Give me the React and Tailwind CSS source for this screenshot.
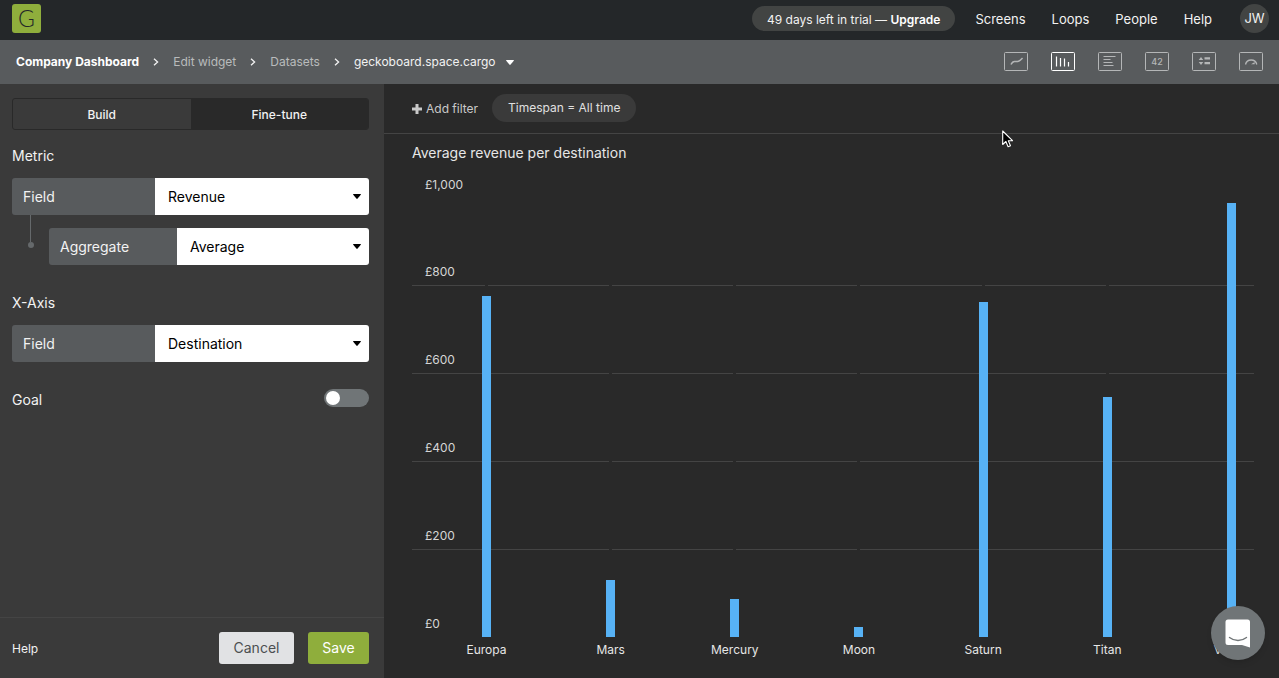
import React, { useState } from 'react';

const navLinks = ['Screens', 'Loops', 'People', 'Help'];

const destinations = [
  { name: 'Europa', revenue: 776 },
  { name: 'Mars', revenue: 130 },
  { name: 'Mercury', revenue: 86 },
  { name: 'Moon', revenue: 23 },
  { name: 'Saturn', revenue: 762 },
  { name: 'Titan', revenue: 547 },
  { name: 'Venus', revenue: 989 },
];

const axisMax = 1000;
const ticks = ['£800', '£600', '£400', '£200'];

const Caret = ({ className }) => (
  <svg aria-hidden="true" viewBox="0 0 8 5" className={className} fill="currentColor">
    <path d="M0 .6Q0 0 .6 0h6.8q.6 0 .6.6L4.6 4.6q-.6.6-1.2 0z" />
  </svg>
);

// ── Widget type icons, all drawn on the same 24x19 frame ──
const widgetTypes = [
  {
    label: 'Line chart',
    art: <path d="M7 12.5c1-2 2-3 3.500-3s2.500.3 4-.3 2.500-1.700 4-3.200" fill="none" stroke="currentColor" strokeWidth="1.5" />,
  },
  {
    label: 'Column chart',
    active: true,
    art: <path d="M5.500 4.500v10M9.500 6v8.500M13.500 6.500v8M17.500 10v4.500" stroke="currentColor" strokeWidth="1.2" />,
  },
  {
    label: 'Bar chart',
    art: <path d="M5.500 4.500h12M5.500 7.500h7M5.500 10.500h9M5.500 13.500h10" stroke="currentColor" strokeWidth="1.2" />,
  },
  {
    label: 'Number',
    art: (
      <text x="12" y="12.500" textAnchor="middle" fontSize="9" fontWeight="500" fill="currentColor">42</text>
    ),
  },
  {
    label: 'Leaderboard',
    art: <path d="M6.700 8l2.300-3 2.300 3zM6.700 10h4.600L9 13zM12.500 5.300H18v2.200h-5.500zM12.500 10H18v2.200h-5.500z" fill="currentColor" />,
  },
  {
    label: 'Geckometer',
    art: (
      <g fill="none" stroke="currentColor" strokeWidth="1.3">
        <path d="M6.500 12.500a5.800 5.800 0 0 1 11.300 0" />
        <path d="M12 12.300l3.700-2.300v2.300z" fill="currentColor" stroke="none" />
      </g>
    ),
  },
];

const Header = () => (
  <header className="flex h-10 items-center justify-between bg-[#242729] pl-3 pr-[10px]">
    <a href="#home" aria-label="Home" className="mb-1 mt-px flex h-[29px] w-[29px] items-center justify-center rounded-[3px] bg-[#8fae3c] font-[Lato] text-[23px] font-light leading-none text-[#242729]">
      G
    </a>
    <nav className="flex items-center text-[13px] text-[#f2f2f2]">
      <a href="#upgrade" className="mb-1 mr-5 flex h-[25px] items-center rounded-full bg-[#424443] px-[15px] pt-[3px] text-xs">
        <span>
          49 days left in trial — <strong className="font-semibold text-white">Upgrade</strong>
        </span>
      </a>
      <div className="mr-7 flex gap-[26px]">
        {navLinks.map((link) => (
          <a key={link} href={`#${link.toLowerCase()}`}>{link}</a>
        ))}
      </div>
      <button type="button" className="mb-1 flex h-[29px] w-[29px] items-center justify-center rounded-full bg-[#424443] pt-px">
        JW
      </button>
    </nav>
  </header>
);

const Separator = () => (
  <svg aria-hidden="true" viewBox="0 0 6 8" className="mx-[14px] h-2 w-[6px]" fill="none" stroke="#f2f2f2" strokeWidth="1.3">
    <path d="M1 .7L4.600 4 1 7.300" />
  </svg>
);

const Toolbar = () => (
  <div className="flex h-11 items-center justify-between bg-[#585b5d] px-4">
    <nav aria-label="Breadcrumb" className="flex items-center text-xs text-[#b9bbbc]">
      <a href="#dashboard" className="font-bold text-white">Company Dashboard</a>
      <Separator />
      <a href="#edit">Edit widget</a>
      <Separator />
      <a href="#datasets">Datasets</a>
      <Separator />
      <button type="button" className="flex items-center gap-[10px] text-[#f2f2f2]">
        geckoboard.space.cargo
        <Caret className="h-[5px] w-2 text-white" />
      </button>
    </nav>
    <div className="flex gap-[23px] pb-[2px]">
      {widgetTypes.map(({ label, active, art }) => (
        <button
          key={label}
          type="button"
          aria-label={label}
          className={active ? 'text-white' : 'text-[#b4b6b7]'}
        >
          <svg viewBox="0 0 24 19" className="h-[19px] w-6">
            <rect x=".5" y=".5" width="23" height="18" rx="1" fill="none" stroke="currentColor" />
            {art}
          </svg>
        </button>
      ))}
    </div>
  </div>
);

const SelectField = ({ id, label, labelWidth, options }) => (
  <div className="relative flex h-[37px] flex-1 overflow-hidden rounded-[3px] text-sm">
    <label htmlFor={id} className={`flex items-center bg-[#585b5d] pl-[11px] text-[#f2f2f2] ${labelWidth}`}>
      {label}
    </label>
    <select id={id} className="min-w-0 flex-1 appearance-none bg-white pl-[13px] text-black">
      {options.map((option) => (
        <option key={option}>{option}</option>
      ))}
    </select>
    <Caret className="pointer-events-none absolute right-2 top-4 h-[5px] w-2 text-black" />
  </div>
);

const Sidebar = () => {
  const [goal, setGoal] = useState(false);

  return (
    <aside className="flex w-96 shrink-0 flex-col bg-[#3a3a3a] text-[#f2f2f2]">
      <div className="flex-1 px-3 pr-[15px] pt-[14px]">
        <div className="flex h-8 overflow-hidden rounded-[3px] border border-[#292929] text-xs font-medium">
          <button type="button" className="flex-1 pt-[2px]">Build</button>
          <button type="button" className="flex-1 bg-[#292929] pt-[2px]">Fine-tune</button>
        </div>

        <h2 className="mt-4 text-sm leading-5">Metric</h2>
        <div className="mt-3 flex">
          <SelectField id="metric-field" label="Field" labelWidth="w-[143px]" options={['Revenue', 'Weight']} />
        </div>
        <div className="flex">
          {/* connector from the field down to its aggregate */}
          <div className="flex h-[33px] w-[37px] flex-col items-center">
            <div className="w-px flex-1 bg-[#65696b]" />
            <div className="h-[6px] w-[6px] rounded-full bg-[#65696b]" />
          </div>
          <div className="mt-[13px] flex flex-1">
            <SelectField id="metric-aggregate" label="Aggregate" labelWidth="w-32" options={['Average', 'Sum', 'Count']} />
          </div>
        </div>

        <h2 className="mt-7 text-sm leading-5">X-Axis</h2>
        <div className="mt-3 flex">
          <SelectField id="axis-field" label="Field" labelWidth="w-[143px]" options={['Destination', 'Date']} />
        </div>

        <label className="mt-[27px] flex items-start justify-between text-sm leading-[22px]">
          Goal
          <input
            type="checkbox"
            role="switch"
            checked={goal}
            onChange={() => setGoal(!goal)}
            className="h-[18px] w-[45px] appearance-none rounded-full bg-[#707577] p-[2px] before:block before:h-[14px] before:w-[14px] before:rounded-full before:bg-white checked:bg-[#8fae3c] checked:before:ml-auto"
          />
        </label>
      </div>

      <footer className="flex h-[61px] items-center border-t border-[#444444] pl-3 pr-[15px]">
        <a href="#help" className="mr-auto pt-[2px] text-xs">Help</a>
        <button type="button" className="h-8 w-[75px] rounded-[3px] bg-[#e1e2e4] text-sm text-[#4c4f51]">Cancel</button>
        <button type="button" className="ml-[14px] h-8 w-[61px] rounded-[3px] bg-[#8fae3c] text-sm text-white">Save</button>
      </footer>
    </aside>
  );
};

const Chart = () => (
  <figure className="flex flex-1 flex-col pb-5 pl-7 pr-[25px] pt-[9px]">
    <figcaption className="text-sm leading-5 text-[#e6e6e6]">Average revenue per destination</figcaption>

    <div className="relative mt-[11px] flex flex-1 flex-col text-xs text-[#d6d6d6]">
      <div className="h-6 pl-[13px] leading-[22px]">£1,000</div>
      {ticks.map((tick) => (
        <div key={tick} className="flex flex-1 items-end border-b border-[#444444] pb-[3px] pl-[13px] leading-5">
          {tick}
        </div>
      ))}
      <div className="flex flex-1 items-end pb-[3px] pl-[13px] leading-5">£0</div>
      <div className="h-[21px]" />

      {/* columns lie over the grid; each one is broken out of the grid lines */}
      <div className="absolute inset-0 flex justify-between pl-[70px] pr-[18px] pt-6">
        {destinations.map(({ name, revenue }) => (
          <div key={name} className="flex w-[9px] flex-col items-center">
            <div className="flex w-full flex-1 flex-col items-center">
              <div className="w-[3px] flex-1 bg-[#292929]" />
              <div className="w-full bg-[#57b2f5]" style={{ height: `${(revenue / axisMax) * 100}%` }} />
            </div>
            <span className="h-[21px] whitespace-nowrap pt-1 leading-[18px] text-[#e6e6e6]">{name}</span>
          </div>
        ))}
      </div>
    </div>
  </figure>
);

const Preview = () => (
  <main className="flex min-w-0 flex-1 flex-col bg-[#292929]">
    <div className="flex h-[50px] items-center border-b border-[#444444] pb-px pl-7 text-xs">
      <button type="button" className="flex items-center gap-1 pt-[2px] text-[#c9c9c9]">
        <svg aria-hidden="true" viewBox="0 0 10 10" className="h-[10px] w-[10px]" fill="currentColor">
          <path d="M3.500 0h3v3.500H10v3H6.500V10h-3V6.500H0v-3h3.500z" />
        </svg>
        Add filter
      </button>
      <button type="button" className="ml-[14px] h-7 rounded-full bg-[#3a3a3a] px-4 text-[#e0e0e0]">
        Timespan = All time
      </button>
    </div>
    <Chart />
  </main>
);

const App = () => (
  <div className="relative flex min-h-screen flex-col font-[Inter,sans-serif]">
    <Header />
    <Toolbar />
    <div className="flex flex-1">
      <Sidebar />
      <Preview />
    </div>

    <button
      type="button"
      aria-label="Open chat"
      className="fixed bottom-[18px] right-[14px] flex h-[54px] w-[54px] items-center justify-center rounded-full bg-[#707577] shadow-md"
    >
      <svg viewBox="0 0 26 29" className="h-[29px] w-[26px]">
        <path d="M3 .5h19.500a2.500 2.500 0 0 1 2.500 2.500v25.500l-8-2.500H3a2.500 2.500 0 0 1-2.500-2.500V3A2.500 2.500 0 0 1 3 .5z" fill="#fff" />
        <path d="M4.500 18.500c5 4 12 4 17 0" fill="none" stroke="#707577" strokeWidth="1.400" strokeLinecap="round" />
      </svg>
    </button>

    {/* mouse pointer */}
    <svg aria-hidden="true" viewBox="0 0 12 18" className="pointer-events-none absolute left-[1002px] top-[130px] h-[18px] w-3">
      <path d="M.7 1v13.500l3.200-3 2.200 5.200 2.400-1-2.200-5h4.200z" fill="#000" stroke="#fff" strokeWidth="1.100" strokeLinejoin="round" />
    </svg>
  </div>
);

export default App;
